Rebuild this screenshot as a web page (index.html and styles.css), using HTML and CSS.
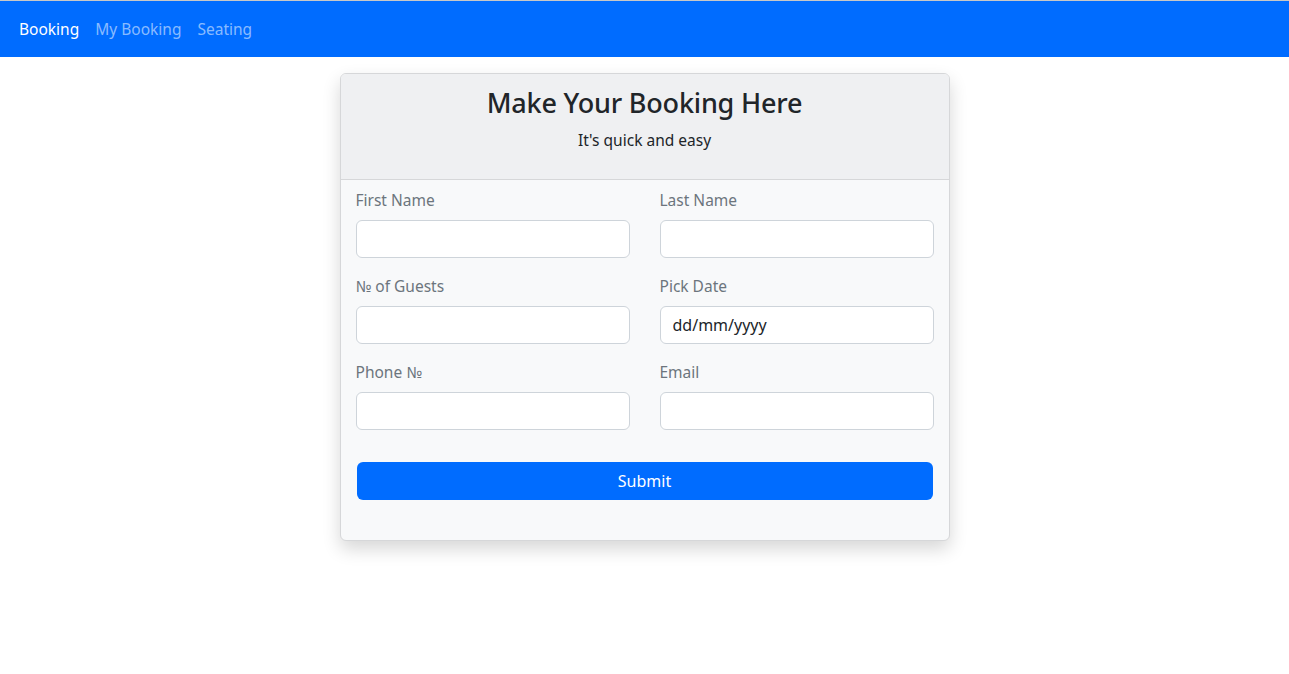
FILE: index.html
```html
<!DOCTYPE html>
<html lang="en">
<head>
<meta charset="utf-8">
<title>Booking</title>
<link rel="stylesheet" href="styles.css">
</head>
<body>
<nav class="navbar">
  <a class="nav-link active" href="#">Booking</a>
  <a class="nav-link" href="#">My Booking</a>
  <a class="nav-link" href="#">Seating</a>
</nav>
<main class="page">
  <section class="card">
    <header class="card-header">
      <h3 class="title">Make Your Booking Here</h3>
      <p class="subtitle">It's quick and easy</p>
    </header>
    <form class="card-body">
      <div class="grid">
        <div class="field">
          <label class="label">First Name</label>
          <input class="input" type="text">
        </div>
        <div class="field">
          <label class="label">Last Name</label>
          <input class="input" type="text">
        </div>
        <div class="field">
          <label class="label">№ of Guests</label>
          <input class="input" type="text">
        </div>
        <div class="field">
          <label class="label">Pick Date</label>
          <input class="input date" type="text" placeholder="dd/mm/yyyy">
        </div>
        <div class="field">
          <label class="label">Phone №</label>
          <input class="input" type="text">
        </div>
        <div class="field">
          <label class="label">Email</label>
          <input class="input" type="text">
        </div>
      </div>
      <button class="btn" type="button">Submit</button>
    </form>
  </section>
</main>
</body>
</html>
```

FILE: styles.css
```css
* { box-sizing: border-box; }
html, body { margin: 0; padding: 0; }
body {
  font-family: "Noto Sans", "Open Sans", sans-serif;
  font-size: 16px;
  line-height: 1.5;
  color: #212529;
  background: #fff;
  border-top: 1px solid #c8c8c8;
  min-height: 674px;
}
.navbar {
  background: #006cff;
  height: 56px;
  display: flex;
  align-items: center;
  padding: 2px 11px 0;
}
.nav-link {
  text-decoration: none;
  color: rgba(255,255,255,0.55);
  padding: 8px 8px;
  font-size: 15.5px;
}
.nav-link.active { color: #fff; }
.page {
  display: flex;
  justify-content: center;
  padding-top: 16px;
}
.card {
  width: 610px;
  border: 1px solid #d6d7d9;
  border-radius: 6px;
  background: #f8f9fa;
  box-shadow: 0 8px 18px rgba(0,0,0,0.16);
}
.card-header {
  background: #eff0f2;
  border-bottom: 1px solid #d6d7d9;
  border-radius: 5px 5px 0 0;
  padding: 12px 16px 12px;
  text-align: center;
}
.title {
  margin: 0 0 8px;
  font-size: 27px;
  font-weight: 500;
  line-height: 34px;
  letter-spacing: -0.2px;
}
.subtitle {
  margin: 0 0 15px;
  font-size: 15.5px;
  line-height: 24px;
}
.card-body {
  padding: 8px 15px 40px;
  display: flex;
  flex-direction: column;
  border-radius: 0 0 5px 5px;
}
.grid {
  display: grid;
  grid-template-columns: 1fr 1fr;
  column-gap: 30px;
  row-gap: 16px;
}
.field { display: flex; flex-direction: column; }
.label {
  color: #6c757d;
  font-size: 15.5px;
  line-height: 24px;
  margin-bottom: 8px;
}
.input {
  height: 38px;
  border: 1px solid #ced4da;
  border-radius: 6px;
  background: #fff;
  padding: 6px 12px;
  font: inherit;
  color: #212529;
}
.input::placeholder { color: #212529; opacity: 1; }
.btn {
  margin: 32px 1px 0;
  height: 38px;
  border: 0;
  border-radius: 6px;
  background: #006cff;
  color: #fff;
  font: inherit;
  font-size: 16px;
  cursor: pointer;
}
```
